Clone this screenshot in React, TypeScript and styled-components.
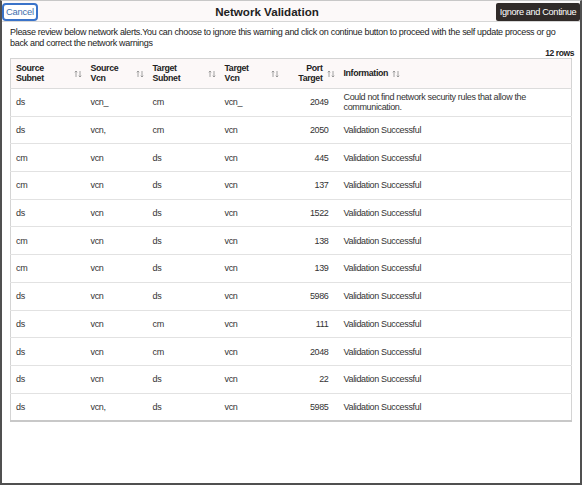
import React from "react";
import styled, { createGlobalStyle } from "styled-components";

const GlobalStyle = createGlobalStyle`
  html, body {
    margin: 0;
    padding: 0;
    background: #ffffff;
  }
  body {
    font-family: "Liberation Sans", Arial, sans-serif;
    color: #333333;
  }
`;

const Frame = styled.div`
  box-sizing: border-box;
  width: 582px;
  height: 485px;
  border: 2px solid #505050;
  border-top: 1px solid #c8c8c8;
  background: #ffffff;
  display: flex;
  flex-direction: column;
`;

const Header = styled.div`
  height: 20px;
  display: flex;
  align-items: center;
  background: #fcf9f9;
  border-bottom: 1px solid #d6d6d6;
`;

const Title = styled.div`
  flex: 1;
  text-align: center;
  font-size: 11.6px;
  font-weight: bold;
  color: #222222;
`;

const CancelButton = styled.button`
  box-sizing: border-box;
  width: 36px;
  height: 18px;
  margin-top: 1px;
  padding: 0;
  border: 2px solid #3a73c9;
  border-radius: 4px;
  background: #ffffff;
  color: #3f6fae;
  font-family: "Liberation Sans", Arial, sans-serif;
  font-size: 9.4px;
  letter-spacing: -0.2px;
`;

const PrimaryButton = styled.button`
  box-sizing: border-box;
  width: 84px;
  height: 18px;
  margin-top: 1px;
  padding: 0;
  border: none;
  border-radius: 2px;
  background: #312b29;
  color: #ffffff;
  font-family: "Liberation Sans", Arial, sans-serif;
  font-size: 9.2px;
  letter-spacing: -0.35px;
`;

const Body = styled.div`
  padding: 5px 8px 0 8px;
  display: flex;
  flex-direction: column;
`;

const Message = styled.p`
  margin: 0;
  font-size: 9px;
  letter-spacing: -0.31px;
  line-height: 10.5px;
  color: #222222;
`;

const RowCount = styled.div`
  text-align: right;
  font-size: 8.5px;
  font-weight: bold;
  letter-spacing: -0.4px;
  color: #222222;
  margin-right: -2px;
  height: 10px;
  line-height: 10px;
`;

const Table = styled.table`
  width: 561px;
  border-collapse: collapse;
  table-layout: fixed;
  border: 1px solid #d4d4d4;
  border-bottom: 2px solid #c8c8c8;
  font-size: 9px;
  letter-spacing: -0.35px;
`;

const HeadCell = styled.th`
  height: 29px;
  background: #fcf8f8;
  padding: 0 4px 0 5px;
  text-align: left;
  font-weight: bold;
  font-size: 8.8px;
  letter-spacing: -0.35px;
  color: #222222;
  line-height: 9.5px;
  border-bottom: 1px solid #dcdcdc;
`;

const HeadInner = styled.div<{ $mode: "spread" | "end" | "start" }>`
  display: flex;
  align-items: center;
  justify-content: ${({ $mode }) =>
    $mode === "spread" ? "space-between" : $mode === "end" ? "flex-end" : "flex-start"};
  gap: 4px;
  text-align: ${({ $mode }) => ($mode === "end" ? "right" : "left")};
`;

const Cell = styled.td<{ $right?: boolean }>`
  height: 26.7px;
  padding: 0 ${({ $right }) => ($right ? "10px" : "4px")} 0 5px;
  text-align: ${({ $right }) => ($right ? "right" : "left")};
  color: #333333;
  line-height: 10px;
  border-bottom: 1px solid #e2e2e2;
  vertical-align: middle;
`;

const SortIcon = () => (
  <svg width="8" height="8" viewBox="0 0 8 8" style={{ flexShrink: 0 }}>
    <g fill="none" stroke="#8a8a8a" strokeWidth="0.8">
      <path d="M2 7V1M0.8 2.3L2 1l1.2 1.3" />
      <path d="M6 1v6M4.8 5.7L6 7l1.2-1.3" />
    </g>
  </svg>
);

type Row = {
  srcSubnet: string;
  srcVcn: string;
  tgtSubnet: string;
  tgtVcn: string;
  port: number;
  info: string;
};

const rows: Row[] = [
  { srcSubnet: "ds", srcVcn: "vcn_", tgtSubnet: "cm", tgtVcn: "vcn_", port: 2049, info: "Could not find network security rules that allow the communication." },
  { srcSubnet: "ds", srcVcn: "vcn,", tgtSubnet: "cm", tgtVcn: "vcn", port: 2050, info: "Validation Successful" },
  { srcSubnet: "cm", srcVcn: "vcn", tgtSubnet: "ds", tgtVcn: "vcn", port: 445, info: "Validation Successful" },
  { srcSubnet: "cm", srcVcn: "vcn", tgtSubnet: "ds", tgtVcn: "vcn", port: 137, info: "Validation Successful" },
  { srcSubnet: "ds", srcVcn: "vcn", tgtSubnet: "ds", tgtVcn: "vcn", port: 1522, info: "Validation Successful" },
  { srcSubnet: "cm", srcVcn: "vcn", tgtSubnet: "ds", tgtVcn: "vcn", port: 138, info: "Validation Successful" },
  { srcSubnet: "cm", srcVcn: "vcn", tgtSubnet: "ds", tgtVcn: "vcn", port: 139, info: "Validation Successful" },
  { srcSubnet: "ds", srcVcn: "vcn", tgtSubnet: "ds", tgtVcn: "vcn", port: 5986, info: "Validation Successful" },
  { srcSubnet: "ds", srcVcn: "vcn", tgtSubnet: "cm", tgtVcn: "vcn", port: 111, info: "Validation Successful" },
  { srcSubnet: "ds", srcVcn: "vcn", tgtSubnet: "cm", tgtVcn: "vcn", port: 2048, info: "Validation Successful" },
  { srcSubnet: "ds", srcVcn: "vcn", tgtSubnet: "ds", tgtVcn: "vcn", port: 22, info: "Validation Successful" },
  { srcSubnet: "ds", srcVcn: "vcn,", tgtSubnet: "ds", tgtVcn: "vcn", port: 5985, info: "Validation Successful" },
];

const columns = [
  { label: ["Source", "Subnet"], width: 75, mode: "spread" as const },
  { label: ["Source", "Vcn"], width: 62, mode: "spread" as const },
  { label: ["Target", "Subnet"], width: 72, mode: "spread" as const },
  { label: ["Target", "Vcn"], width: 63, mode: "spread" as const },
  { label: ["Port", "Target"], width: 56, mode: "end" as const },
  { label: ["Information"], width: 233, mode: "start" as const },
];

export default function App() {
  return (
    <>
      <GlobalStyle />
      <Frame>
        <Header>
          <CancelButton>Cancel</CancelButton>
          <Title>Network Validation</Title>
          <PrimaryButton>Ignore and Continue</PrimaryButton>
        </Header>
        <Body>
          <Message>
            Please review below network alerts.You can choose to ignore this warning and click on
            continue button to proceed with the self update process or go back and correct the
            network warnings
          </Message>
          <RowCount>12 rows</RowCount>
          <Table>
            <colgroup>
              {columns.map((c, i) => (
                <col key={i} style={{ width: c.width }} />
              ))}
            </colgroup>
            <thead>
              <tr>
                {columns.map((c, i) => (
                  <HeadCell key={i}>
                    <HeadInner $mode={c.mode}>
                      <span>
                        {c.label.map((l, j) => (
                          <React.Fragment key={j}>
                            {j > 0 && <br />}
                            {l}
                          </React.Fragment>
                        ))}
                      </span>
                      <SortIcon />
                    </HeadInner>
                  </HeadCell>
                ))}
              </tr>
            </thead>
            <tbody>
              {rows.map((r, i) => (
                <tr key={i}>
                  <Cell>{r.srcSubnet}</Cell>
                  <Cell>{r.srcVcn}</Cell>
                  <Cell>{r.tgtSubnet}</Cell>
                  <Cell>{r.tgtVcn}</Cell>
                  <Cell $right>{r.port}</Cell>
                  <Cell>{r.info}</Cell>
                </tr>
              ))}
            </tbody>
          </Table>
        </Body>
      </Frame>
    </>
  );
}
